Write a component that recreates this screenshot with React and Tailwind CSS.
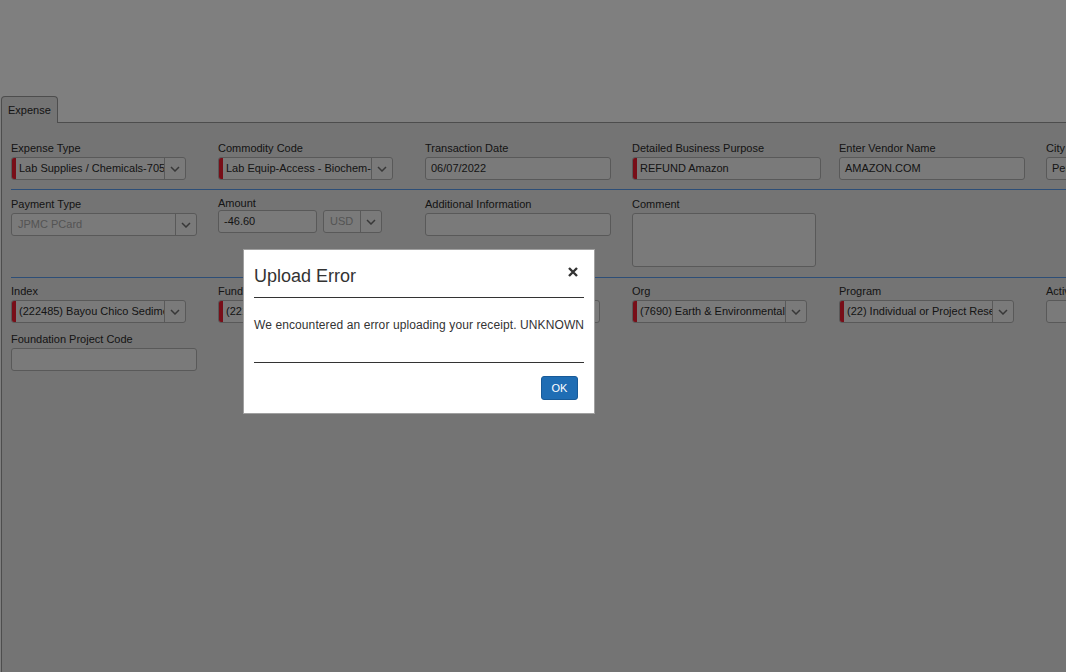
import React from "react";

const Chevron = () => (
  <svg width="10" height="6" viewBox="0 0 10 6" fill="none">
    <path d="M1 1l4 4 4-4" stroke="#707070" strokeWidth="1.5" />
  </svg>
);

function Label({ children, className = "" }) {
  return <div className={"text-[11px] leading-[14px] text-[#2b2b2b] mb-[2px] whitespace-nowrap " + className}>{children}</div>;
}

function Select({ value, required, disabled, width = "w-[175px]" }) {
  return (
    <div className={"flex h-[23px] rounded-[3px] border border-[#b2b2b2] bg-[#f5f5f5] overflow-hidden " + width}>
      {required && <div className="w-[4px] shrink-0 bg-[#f01c30]" />}
      <div className={"flex-1 min-w-0 text-[11px] leading-[21px] whitespace-nowrap overflow-hidden " + (required ? "pl-[3px] pr-[2px] " : "px-[6px] ") + (disabled ? "text-[#a8a8a8]" : "text-[#2b2b2b]")}>
        {value}
      </div>
      <div className="w-[21px] shrink-0 border-l border-[#b2b2b2] flex items-center justify-center">
        <Chevron />
      </div>
    </div>
  );
}

function Input({ value, required, width = "w-[186px]", height = "h-[23px]" }) {
  return (
    <div className={"flex rounded-[3px] border border-[#b2b2b2] bg-[#f5f5f5] overflow-hidden " + width + " " + height}>
      {required && <div className="w-[4px] shrink-0 bg-[#f01c30]" />}
      <div className={"flex-1 text-[11px] leading-[21px] text-[#2b2b2b] whitespace-nowrap overflow-hidden " + (required ? "pl-[3px]" : "px-[5px]")}>{value}</div>
    </div>
  );
}

function Col({ children }) {
  return <div className="w-[207px] shrink-0">{children}</div>;
}

export default function App() {
  return (
    <div className="relative w-[1066px] h-[672px] overflow-hidden bg-white font-['Liberation_Sans',Arial,sans-serif]">
      <div className="h-[96px]" />

      {/* tab strip */}
      <div className="flex items-end h-[27px] pl-[1px]">
        <div className="h-[27px] w-[57px] rounded-t-[4px] border border-b-0 border-[#9a9a9a] bg-[#e8e8e8] text-[11px] text-[#2b2b2b] px-[6px] leading-[26px]">
          Expense
        </div>
        <div className="flex-1 border-b border-[#9a9a9a]" />
      </div>

      {/* panel */}
      <div className="ml-[1px] h-[560px] border-l border-[#9a9a9a] bg-[#e8e8e8] pl-[9px] pt-[18px]">
        <div className="flex">
          <Col><Label>Expense Type</Label><Select value="Lab Supplies / Chemicals-705" required /></Col>
          <Col><Label>Commodity Code</Label><Select value="Lab Equip-Access - Biochem-Sup" required /></Col>
          <Col><Label>Transaction Date</Label><Input value="06/07/2022" /></Col>
          <Col><Label>Detailed Business Purpose</Label><Input value="REFUND Amazon" required width="w-[189px]" /></Col>
          <Col><Label>Enter Vendor Name</Label><Input value="AMAZON.COM" /></Col>
          <Col><Label>City</Label><Input value="Pensacola" /></Col>
        </div>

        <div className="mt-[9px] border-t border-[#5a9cee]" />

        <div className="flex mt-[7px]">
          <Col><Label>Payment Type</Label><Select value="JPMC PCard" disabled width="w-[186px]" /></Col>
          <Col>
            <Label className="-mt-[1px]">Amount</Label>
            <div className="flex gap-[6px] -mt-[2px]">
              <Input value="-46.60" width="w-[99px]" />
              <Select value={<span className="text-[#a8a8a8]">USD</span>} width="w-[59px]" />
            </div>
          </Col>
          <Col><Label>Additional Information</Label><Input value="" /></Col>
          <Col><Label>Comment</Label><Input value="" width="w-[184px]" height="h-[54px]" /></Col>
        </div>

        <div className="mt-[10px] border-t border-[#5a9cee]" />

        <div className="flex mt-[6px]">
          <Col><Label>Index</Label><Select value="(222485) Bayou Chico Sediment" required /></Col>
          <Col><Label>Fund</Label><Select value="(221000) Contracts & Grants" required /></Col>
          <Col><Label>Account</Label><Select value="(7050) Lab Supplies" required /></Col>
          <Col><Label>Org</Label><Select value="(7690) Earth & Environmental" required /></Col>
          <Col><Label>Program</Label><Select value="(22) Individual or Project Research" required /></Col>
          <Col><Label>Activity</Label><Input value="" /></Col>
        </div>

        <div className="mt-[9px]">
          <Label>Foundation Project Code</Label>
          <Input value="" />
        </div>
      </div>

      {/* overlay */}
      <div className="absolute inset-0 bg-black/50" />

      {/* modal */}
      <div className="absolute left-[243px] top-[249px] w-[352px] h-[165px] bg-white border border-[#a0a0a0] px-[10px]">
        <div className="flex items-center justify-between h-[48px] border-b border-[#333]">
          <div className="text-[18px] text-[#333] pt-[6px]">Upload Error</div>
          <svg width="10" height="10" viewBox="0 0 10 10" className="mr-[6px] -mt-[3px]">
            <path d="M1 1l8 8M9 1l-8 8" stroke="#333" strokeWidth="2.4" />
          </svg>
        </div>
        <div className="h-[65px] border-b border-[#333] pt-[18px] text-[12px] text-[#333] whitespace-nowrap tracking-[0.1px]">
          We encountered an error uploading your receipt. UNKNOWN
        </div>
        <div className="flex justify-end pt-[13px] pr-[6px]">
          <div className="w-[37px] h-[24px] rounded-[3px] bg-[#1f6db4] border border-[#185a98] text-white text-[11px] leading-[22px] text-center">
            OK
          </div>
        </div>
      </div>
    </div>
  );
}
